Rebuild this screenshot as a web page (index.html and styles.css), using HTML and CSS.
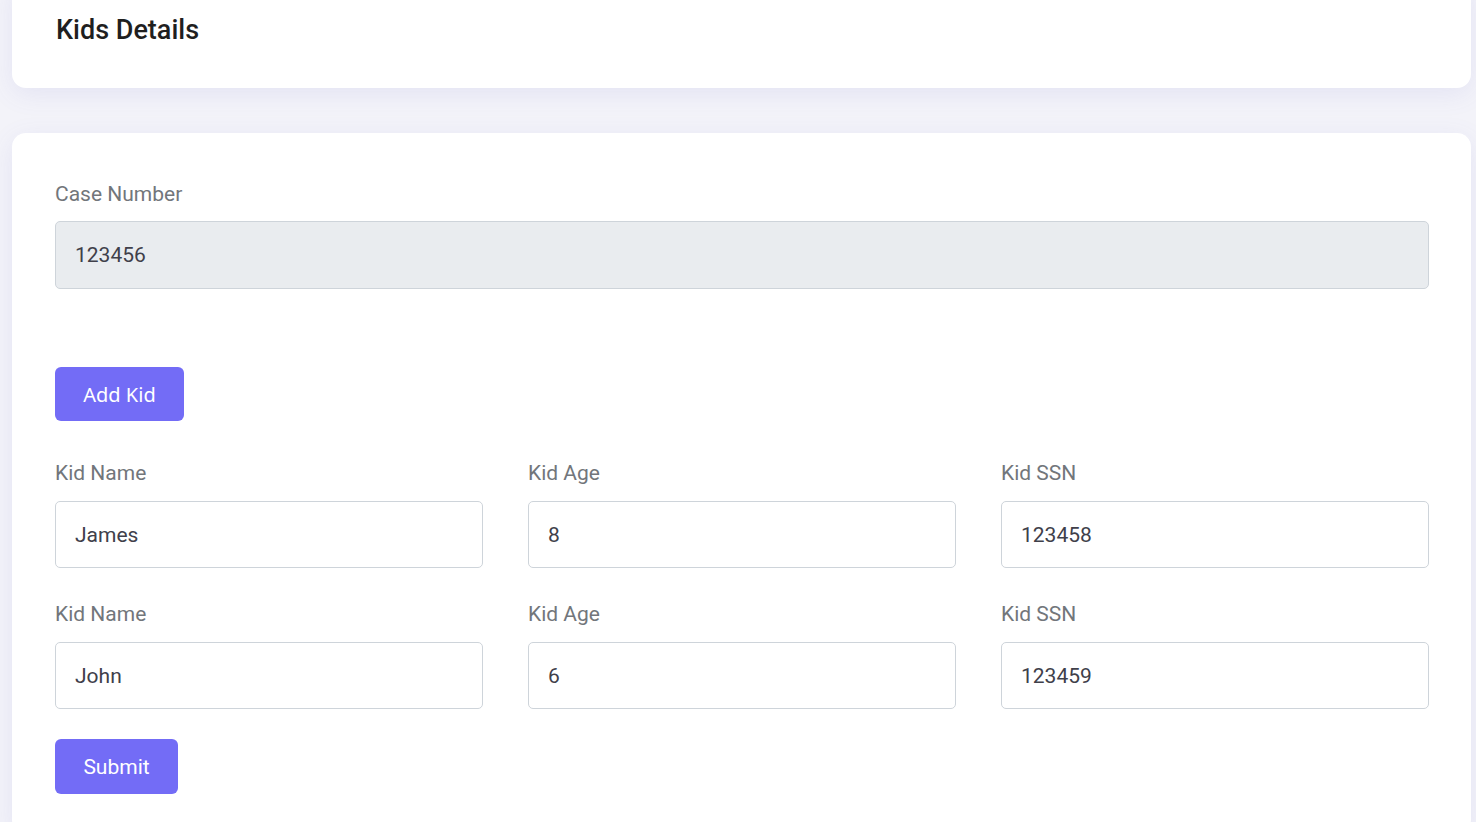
FILE: index.html
```html
<!DOCTYPE html>
<html lang="en">
<head>
<meta charset="utf-8">
<title>Kids Details</title>
<link rel="stylesheet" href="styles.css">
</head>
<body>
<div class="page">
  <div class="card header-card">
    <h1 class="title">Kids Details</h1>
  </div>
  <div class="card form-card">
    <div class="field">
      <label class="label">Case Number</label>
      <input class="input input-disabled" type="text" value="123456" disabled>
    </div>
    <div class="add-row">
      <button class="btn btn-add" type="button">Add Kid</button>
    </div>
    <div class="kid-row">
      <div class="field">
        <label class="label">Kid Name</label>
        <input class="input" type="text" value="James">
      </div>
      <div class="field">
        <label class="label">Kid Age</label>
        <input class="input" type="text" value="8">
      </div>
      <div class="field">
        <label class="label">Kid SSN</label>
        <input class="input" type="text" value="123458">
      </div>
    </div>
    <div class="kid-row">
      <div class="field">
        <label class="label">Kid Name</label>
        <input class="input" type="text" value="John">
      </div>
      <div class="field">
        <label class="label">Kid Age</label>
        <input class="input" type="text" value="6">
      </div>
      <div class="field">
        <label class="label">Kid SSN</label>
        <input class="input" type="text" value="123459">
      </div>
    </div>
    <div class="submit-row">
      <button class="btn btn-submit" type="submit">Submit</button>
    </div>
  </div>
</div>
</body>
</html>
```
FILE: styles.css
```css
* { box-sizing: border-box; }
html, body {
  margin: 0;
  padding: 0;
  background: #f3f3f9;
  font-family: Roboto, "Liberation Sans", sans-serif;
  overflow: hidden;
}
.page {
  padding: 0 5px 0 12px;
  display: flex;
  flex-direction: column;
  gap: 45px;
}
.card {
  background: #ffffff;
  border-radius: 14px;
  box-shadow: 0 6px 26px rgba(100, 96, 200, 0.10);
}
.header-card {
  margin-top: -20px;
  padding: 30px 43px 0 44px;
  height: 108px;
}
.title {
  margin: 0;
  font-size: 27px;
  font-weight: 500;
  color: #1f1f1f;
  line-height: 40px;
}
.form-card {
  padding: 46px 42px 40px 43px;
}
.field {
  display: flex;
  flex-direction: column;
}
.label {
  font-size: 21px;
  line-height: 30px;
  color: #72767b;
  margin: 0 0 12px 0;
}
.input {
  height: 68px;
  width: 100%;
  border: 1px solid #ced4da;
  border-radius: 5px;
  padding: 0 19px;
  font-family: Roboto, "Liberation Sans", sans-serif;
  font-size: 21px;
  color: #40404a;
  background: #ffffff;
  outline: none;
}
.input-disabled {
  background: #e9ecef;
  color: #40404a;
  opacity: 1;
  -webkit-text-fill-color: #40404a;
}
.add-row {
  margin-top: 78px;
}
.btn {
  border: none;
  border-radius: 6px;
  background: #736cf6;
  color: #ffffff;
  font-size: 20px;
  cursor: pointer;
}
.btn-add {
  width: 129px;
  height: 54px;
  font-family: "Noto Sans", "Open Sans", sans-serif;
}
.btn-submit {
  width: 123px;
  height: 55px;
  font-family: Roboto, "Liberation Sans", sans-serif;
  font-size: 21px;
}
.kid-row {
  display: grid;
  grid-template-columns: repeat(3, 1fr);
  column-gap: 45px;
  margin-top: 37px;
}
.kid-row .input {
  height: 67px;
}
.kid-row .label {
  margin-bottom: 13px;
}
.kid-row + .kid-row {
  margin-top: 31px;
}
.submit-row {
  margin-top: 30px;
}
```
